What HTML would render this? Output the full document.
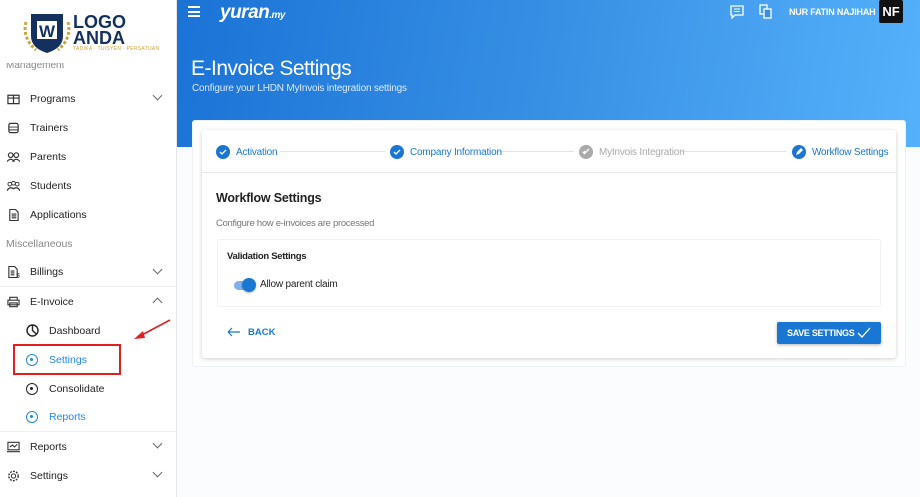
<!DOCTYPE html>
<html><head><style>
*{box-sizing:border-box;margin:0;padding:0}
body{width:920px;height:497px;overflow:hidden;font-family:"Liberation Sans",sans-serif;background:#fff;position:relative}
.side{position:absolute;left:0;top:0;width:177px;height:497px;background:#fff;border-right:1px solid #e6e6e6}
.item{position:absolute;left:0;width:176px;height:29px;font-size:10.5px;color:#222;display:flex;align-items:center}
.item .ic{position:absolute;left:7px;width:13px;height:12px}
.item .lb{position:absolute;left:30px}
.item .ch{position:absolute;left:154px;width:7px;height:7px;border-right:1.4px solid #666;border-bottom:1.4px solid #666;transform:rotate(45deg);top:8px}
.item .up{transform:rotate(-135deg);top:12px}
.sub .lb{left:49px}
.sub .dot{position:absolute;left:26px;width:12px;height:12px;border:1.5px solid #222;border-radius:50%}
.sub .dot:after{content:"";position:absolute;left:3px;top:3px;width:3px;height:3px;border-radius:50%;background:#222}
.blue .lb{color:#1e88e5}.blue .dot{border-color:#1e88e5}.blue .dot:after{background:#1e88e5}
.main{position:absolute;left:177px;top:0;width:743px;height:497px;background:#fbfcfe}
.banner{position:absolute;left:0;top:0;width:743px;height:147px;background:linear-gradient(100deg,#1a73d6 0%,#3b93e6 55%,#55b1fb 100%)}
.step{position:absolute;top:145px;display:flex;align-items:center;font-size:10px;letter-spacing:-.2px;color:#1976d2}
.circ{width:14px;height:14px;border-radius:50%;background:#1976d2;margin-right:6px;position:relative}
.line{position:absolute;top:151px;height:1px;background:#e3e3e3}
</style></head><body>
<div class="side">
 <svg style="position:absolute;left:22px;top:12px" width="50" height="42" viewBox="0 0 50 42"><path d="M4 10 Q0 26 14 38 M46 10 Q50 26 36 38" stroke="#c9a640" stroke-width="3" fill="none" stroke-dasharray="3 2"/><path d="M9 2 H41 V24 Q41 36 25 41 Q9 36 9 24Z" fill="#14305f"/><rect x="15" y="9" width="20" height="18" fill="#fff"/><text x="25" y="25" text-anchor="middle" font-family="Liberation Sans" font-weight="bold" font-size="17" fill="#14305f">W</text></svg>
 <div style="position:absolute;left:73px;top:14px;font:900 18px/16px 'Liberation Sans',sans-serif;color:#14305f">LOGO<br>ANDA</div>
 <div style="position:absolute;left:73px;top:46px;font-size:5px;color:#c9a640;letter-spacing:.3px">TADIKA · TUISYEN · PERSATUAN</div>
 <div style="position:absolute;left:6px;top:63px;font-size:10px;color:#888;height:9px;overflow:hidden;line-height:6px">Management</div>
 <div class="item" style="top:84px"><svg class="ic" viewBox="0 0 14 12"><path d="M1 2h12v9H1zM7 2v9M1 5h12" stroke="#333" fill="none" stroke-width="1.3"/></svg><span class="lb">Programs</span><span class="ch"></span></div>
 <div class="item" style="top:113px"><svg class="ic" viewBox="0 0 14 12"><rect x="2" y="1" width="10" height="10" rx="2" stroke="#333" fill="none" stroke-width="1.3"/><path d="M2 5h10M2 8h10" stroke="#333"/></svg><span class="lb">Trainers</span></div>
 <div class="item" style="top:142px"><svg class="ic" viewBox="0 0 14 12"><circle cx="4" cy="4" r="2.5" stroke="#333" fill="none" stroke-width="1.3"/><circle cx="10" cy="4" r="2.5" stroke="#333" fill="none" stroke-width="1.3"/><path d="M0 11q4-5 8 0M6 11q4-5 8 0" stroke="#333" fill="none" stroke-width="1.3"/></svg><span class="lb">Parents</span></div>
 <div class="item" style="top:171px"><svg class="ic" viewBox="0 0 14 12"><circle cx="3" cy="4" r="2" stroke="#333" fill="none"/><circle cx="7" cy="3" r="2" stroke="#333" fill="none"/><circle cx="11" cy="4" r="2" stroke="#333" fill="none"/><path d="M0 11q3-5 7-2q4-3 7 2" stroke="#333" fill="none" stroke-width="1.3"/></svg><span class="lb">Students</span></div>
 <div class="item" style="top:200px"><svg class="ic" viewBox="0 0 14 12"><path d="M3 0h6l3 3v9H3z M5 5h5M5 7h5M5 9h5" stroke="#333" fill="none" stroke-width="1.2"/></svg><span class="lb">Applications</span></div>
 <div style="position:absolute;left:6px;top:238px;font-size:10.5px;color:#888">Miscellaneous</div>
 <div class="item" style="top:258px;border-bottom:1px solid #f0f0f0"><svg class="ic" viewBox="0 0 14 12"><path d="M2 0h6l3 3v9H2z M4 5h4M4 7h4M4 9h4" stroke="#333" fill="none" stroke-width="1.2"/><text x="10" y="12" font-size="7" fill="#333">$</text></svg><span class="lb">Billings</span><span class="ch"></span></div>
 <div class="item" style="top:287px"><svg class="ic" viewBox="0 0 14 12"><path d="M3 1h8v3H3zM1 4h12v5H1zM3 7h8v4H3z" stroke="#333" fill="none" stroke-width="1.2"/></svg><span class="lb">E-Invoice</span><span class="ch up"></span></div>
 <div class="item sub" style="top:316px"><svg style="position:absolute;left:26px" width="13" height="13" viewBox="0 0 13 13"><circle cx="6.5" cy="6.5" r="5.5" stroke="#222" fill="none" stroke-width="1.4"/><path d="M6.5 1v5.5l4 3.5" stroke="#222" fill="none" stroke-width="1.4"/></svg><span class="lb">Dashboard</span></div>
 <div class="item sub blue" style="top:345px"><span class="dot"></span><span class="lb">Settings</span></div>
 <div style="position:absolute;left:13px;top:344px;width:108px;height:31px;border:2px solid #e02020"></div>
 <div class="item sub" style="top:374px"><span class="dot"></span><span class="lb">Consolidate</span></div>
 <div class="item sub blue" style="top:403px;border-bottom:1px solid #f0f0f0"><span class="dot"></span><span class="lb">Reports</span></div>
 <div class="item" style="top:432px"><svg class="ic" viewBox="0 0 14 12"><path d="M1 1h12v8H1zM0 11h14M3 6l3-2 2 2 3-3" stroke="#333" fill="none" stroke-width="1.2"/></svg><span class="lb">Reports</span><span class="ch"></span></div>
 <div class="item" style="top:461px"><svg class="ic" viewBox="0 0 14 14"><circle cx="7" cy="7" r="2.5" stroke="#333" fill="none" stroke-width="1.2"/><circle cx="7" cy="7" r="5.5" stroke="#333" fill="none" stroke-width="1.6" stroke-dasharray="2.2 1.4"/></svg><span class="lb">Settings</span><span class="ch"></span></div>
 <svg style="position:absolute;left:130px;top:318px" width="42" height="24"><path d="M40 2 L8 19" stroke="#e02020" stroke-width="1.6"/><path d="M4 21 L13 13 L15 20Z" fill="#e02020"/></svg>
</div>
<div class="main">
 <div class="banner"></div>
 <div style="position:absolute;left:11px;top:6px;width:12px"><div style="height:2px;background:#fff;margin-bottom:2.5px"></div><div style="height:2px;background:#fff;margin-bottom:2.5px"></div><div style="height:2px;background:#fff"></div></div>
 <div style="position:absolute;left:43px;top:2px;color:#fff;font:italic bold 19px 'Liberation Sans',sans-serif;letter-spacing:-.5px">yuran<span style="font-size:10px">.my</span></div>
 <svg style="position:absolute;left:553px;top:5px" width="14" height="14" viewBox="0 0 14 14"><path d="M1 1h12v9H5l-3 3v-3H1z" stroke="#fff" fill="none" stroke-width="1.3"/><path d="M4 4h6M4 6.5h6" stroke="#fff"/></svg>
 <svg style="position:absolute;left:582px;top:4px" width="13" height="15" viewBox="0 0 13 15"><rect x="1" y="1" width="7" height="9" stroke="#fff" fill="none" stroke-width="1.3"/><rect x="5" y="5" width="7" height="9" stroke="#fff" fill="#3b8fe3" stroke-width="1.3"/></svg>
 <div style="position:absolute;left:612px;top:7px;color:#fff;font-size:9px;font-weight:bold;letter-spacing:-.2px">NUR FATIN NAJIHAH</div>
 <div style="position:absolute;left:702px;top:0;width:24px;height:23px;background:#111;color:#fff;font-weight:bold;font-size:13px;text-align:center;line-height:23px;border-radius:2px">NF</div>
 <div style="position:absolute;left:14px;top:57px;color:#fff;font-size:21px;letter-spacing:-.5px">E-Invoice Settings</div>
 <div style="position:absolute;left:15px;top:83px;color:#dceafb;font-size:10px;letter-spacing:-.2px">Configure your LHDN MyInvois integration settings</div>
 <div style="position:absolute;left:15px;top:120px;width:714px;height:247px;background:#fff;border-radius:3px;border:1px solid #eef1f6"></div>
 <div style="position:absolute;left:25px;top:130px;width:694px;height:228px;background:#fff;border-radius:3px;box-shadow:0 1px 4px rgba(0,0,0,.2)"></div>
 <div style="position:absolute;left:25px;top:172px;width:694px;height:1px;background:#eaeaea"></div>
 <div class="line" style="left:103px;width:105px"></div><div class="line" style="left:320px;width:77px"></div><div class="line" style="left:503px;width:106px"></div>
 <div class="step" style="left:39px"><div class="circ"><svg width="14" height="14"><path d="M4 7l2 2 4-4" stroke="#fff" fill="none" stroke-width="1.3"/></svg></div>Activation</div>
 <div class="step" style="left:213px"><div class="circ"><svg width="14" height="14"><path d="M4 7l2 2 4-4" stroke="#fff" fill="none" stroke-width="1.3"/></svg></div>Company Information</div>
 <div class="step" style="left:402px;color:#aaa"><div class="circ" style="background:#aaa"><svg width="14" height="14"><path d="M5 9l4-4M4 8l2-2M8 6l2-2" stroke="#fff" stroke-width="1.3"/></svg></div>MyInvois Integration</div>
 <div class="step" style="left:615px"><div class="circ"><svg width="14" height="14"><path d="M4 10l1-3 4-4 2 2-4 4z" fill="#fff"/></svg></div>Workflow Settings</div>
 <div style="position:absolute;left:39px;top:191px;font-size:12.5px;font-weight:bold;color:#222;letter-spacing:-.2px">Workflow Settings</div>
 <div style="position:absolute;left:39px;top:218px;font-size:9.5px;color:#777;letter-spacing:-.3px">Configure how e-invoices are processed</div>
 <div style="position:absolute;left:40px;top:239px;width:664px;height:68px;border:1px solid #f1f1f1;border-radius:3px"></div>
 <div style="position:absolute;left:50px;top:251px;font-size:9.5px;font-weight:bold;color:#222;letter-spacing:-.3px">Validation Settings</div>
 <div style="position:absolute;left:57px;top:281px;width:19px;height:9px;border-radius:5px;background:#7fb2ec"></div>
 <div style="position:absolute;left:65px;top:278px;width:14px;height:14px;border-radius:50%;background:#1976d2;box-shadow:0 1px 2px rgba(0,0,0,.3)"></div>
 <div style="position:absolute;left:83px;top:279px;font-size:10px;color:#222;letter-spacing:-.2px">Allow parent claim</div>
 <svg style="position:absolute;left:50px;top:327px" width="13" height="10"><path d="M1 5h12M1 5l4-4M1 5l4 4" stroke="#1976d2" fill="none" stroke-width="1.2"/></svg>
 <div style="position:absolute;left:71px;top:327px;font-size:9.5px;font-weight:bold;color:#1976d2">BACK</div>
 <div style="position:absolute;left:600px;top:322px;width:104px;height:22px;background:#1976d2;border-radius:2px;box-shadow:0 1px 3px rgba(0,0,0,.3);color:#fff;font-size:9px;font-weight:bold;line-height:22px;padding-left:10px;letter-spacing:-.3px">SAVE SETTINGS<svg style="position:absolute;left:80px;top:5px" width="14" height="11"><path d="M1 6l4 4 8-9" stroke="#fff" fill="none" stroke-width="1.3"/></svg></div>
</div>
</body></html>
